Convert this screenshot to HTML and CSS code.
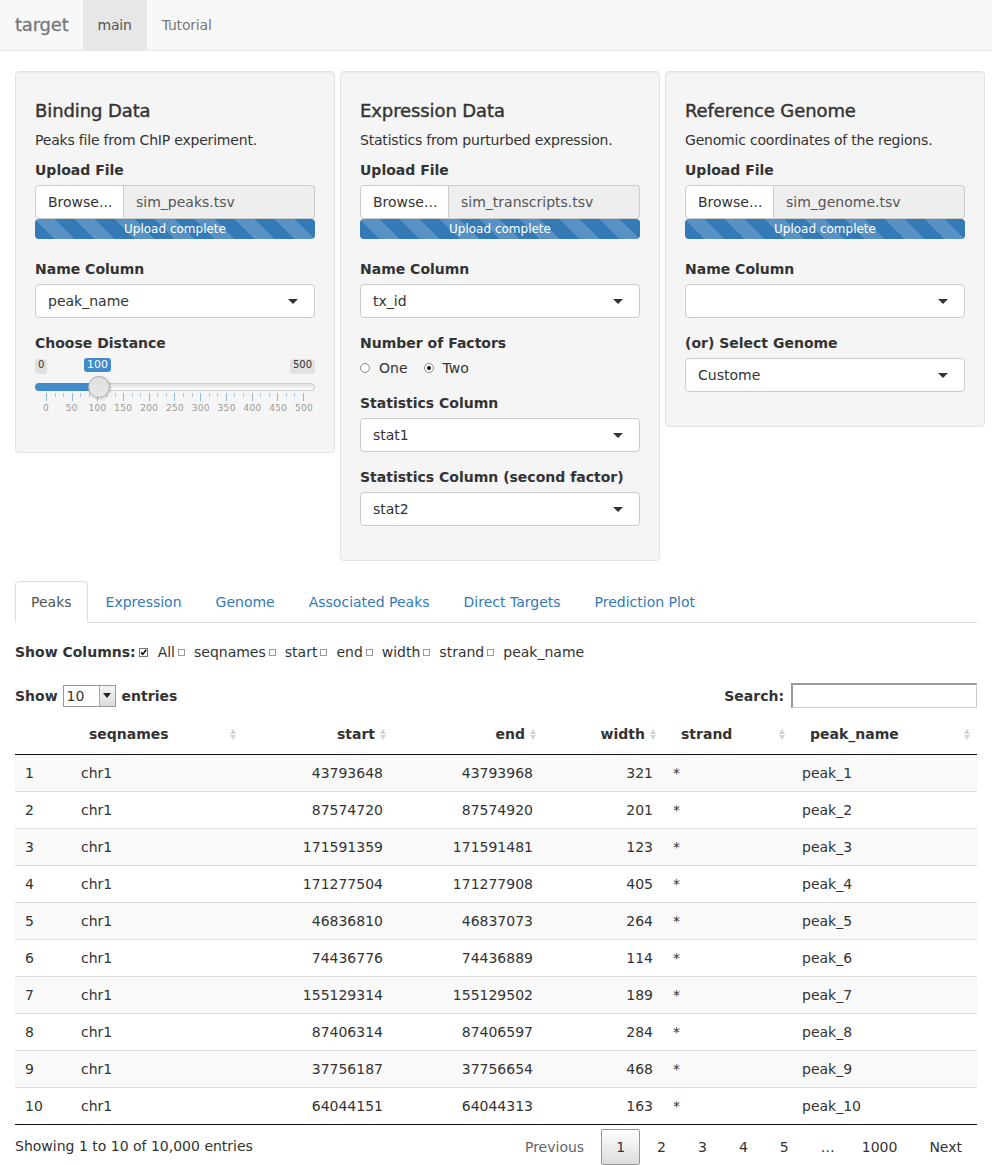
FILE: index.html
```html
<!DOCTYPE html>
<html>
<head>
<meta charset="utf-8">
<title>target</title>
<link rel="stylesheet" href="styles.css">
</head>
<body>
<nav class="navbar">
  <span class="brand">target</span>
  <a class="nav-link active">main</a>
  <a class="nav-link">Tutorial</a>
</nav>

<main class="page">
  <section class="wells">
    <div class="well">
      <h4 class="well-title">Binding Data</h4>
      <p class="well-desc">Peaks file from ChIP experiment.</p>
      <label class="lbl">Upload File</label>
      <div class="file-input">
        <span class="browse">Browse...</span>
        <span class="file-name">sim_peaks.tsv</span>
      </div>
      <div class="progress">Upload complete</div>
      <label class="lbl">Name Column</label>
      <div class="select"><span class="select-text">peak_name</span><span class="caret"></span></div>
      <label class="lbl">Choose Distance</label>
      <div class="slider">
        <div class="slider-labels">
          <span class="irs-minmax">0</span>
          <span class="irs-minmax">500</span>
          <span class="irs-from">100</span>
        </div>
        <div class="irs-line"><div class="irs-bar"></div><span class="irs-handle"></span></div>
        <div class="irs-ticks">
          <i class="maj"></i><i></i><i></i><i class="maj"></i><i></i><i></i><i class="maj"></i><i></i><i></i><i class="maj"></i><i></i><i></i><i class="maj"></i><i></i><i></i><i class="maj"></i><i></i><i></i><i class="maj"></i><i></i><i></i><i class="maj"></i><i></i><i></i><i class="maj"></i><i></i><i></i><i class="maj"></i><i></i><i></i><i class="maj"></i>
        </div>
        <div class="irs-nums">
          <span>0</span><span>50</span><span>100</span><span>150</span><span>200</span><span>250</span><span>300</span><span>350</span><span>400</span><span>450</span><span>500</span>
        </div>
      </div>
    </div>

    <div class="well">
      <h4 class="well-title">Expression Data</h4>
      <p class="well-desc">Statistics from purturbed expression.</p>
      <label class="lbl">Upload File</label>
      <div class="file-input">
        <span class="browse">Browse...</span>
        <span class="file-name">sim_transcripts.tsv</span>
      </div>
      <div class="progress">Upload complete</div>
      <label class="lbl">Name Column</label>
      <div class="select"><span class="select-text">tx_id</span><span class="caret"></span></div>
      <label class="lbl">Number of Factors</label>
      <div class="radios">
        <span class="radio"><span class="radio-dot"></span>One</span>
        <span class="radio"><span class="radio-dot checked"></span>Two</span>
      </div>
      <label class="lbl">Statistics Column</label>
      <div class="select"><span class="select-text">stat1</span><span class="caret"></span></div>
      <label class="lbl">Statistics Column (second factor)</label>
      <div class="select"><span class="select-text">stat2</span><span class="caret"></span></div>
    </div>

    <div class="well">
      <h4 class="well-title">Reference Genome</h4>
      <p class="well-desc">Genomic coordinates of the regions.</p>
      <label class="lbl">Upload File</label>
      <div class="file-input">
        <span class="browse">Browse...</span>
        <span class="file-name">sim_genome.tsv</span>
      </div>
      <div class="progress">Upload complete</div>
      <label class="lbl">Name Column</label>
      <div class="select"><span class="select-text"></span><span class="caret"></span></div>
      <label class="lbl">(or) Select Genome</label>
      <div class="select"><span class="select-text">Custome</span><span class="caret"></span></div>
    </div>
  </section>

  <ul class="tabs">
    <li class="tab active">Peaks</li>
    <li class="tab">Expression</li>
    <li class="tab">Genome</li>
    <li class="tab">Associated Peaks</li>
    <li class="tab">Direct Targets</li>
    <li class="tab">Prediction Plot</li>
  </ul>

  <div class="tab-content">
    <div class="show-cols">
      <b>Show Columns:</b>
      <span class="cb checked"><svg width="9" height="9" viewBox="0 0 9 9"><rect x="0.5" y="0.5" width="8" height="8" fill="#fff" stroke="#777"/><path d="M2 4.2 L3.8 6.2 L7.2 1.8" fill="none" stroke="#111" stroke-width="1.6"/></svg></span><span class="opt">All</span>
      <span class="cb"></span><span class="opt">seqnames</span>
      <span class="cb"></span><span class="opt">start</span>
      <span class="cb"></span><span class="opt">end</span>
      <span class="cb"></span><span class="opt">width</span>
      <span class="cb"></span><span class="opt">strand</span>
      <span class="cb"></span><span class="opt">peak_name</span>
    </div>

    <div class="dt-top">
      <div class="dt-length">
        <b>Show</b>
        <span class="dt-select"><span class="dt-select-val">10</span><span class="dt-select-btn"><span class="tri"></span></span></span>
        <b>entries</b>
      </div>
      <div class="dt-filter">
        <b>Search:</b>
        <span class="dt-search"></span>
      </div>
    </div>

    <table class="dt">
      <colgroup>
        <col class="c-idx"><col class="c-seq"><col class="c-num"><col class="c-num"><col class="c-w"><col class="c-str"><col class="c-name">
      </colgroup>
      <thead>
        <tr>
          <th class="idx"></th>
          <th>seqnames<span class="sort"></span></th>
          <th class="right">start<span class="sort"></span></th>
          <th class="right">end<span class="sort"></span></th>
          <th class="right">width<span class="sort"></span></th>
          <th>strand<span class="sort"></span></th>
          <th>peak_name<span class="sort"></span></th>
        </tr>
      </thead>
      <tbody>
        <tr><td>1</td><td>chr1</td><td class="right">43793648</td><td class="right">43793968</td><td class="right">321</td><td>*</td><td>peak_1</td></tr>
        <tr><td>2</td><td>chr1</td><td class="right">87574720</td><td class="right">87574920</td><td class="right">201</td><td>*</td><td>peak_2</td></tr>
        <tr><td>3</td><td>chr1</td><td class="right">171591359</td><td class="right">171591481</td><td class="right">123</td><td>*</td><td>peak_3</td></tr>
        <tr><td>4</td><td>chr1</td><td class="right">171277504</td><td class="right">171277908</td><td class="right">405</td><td>*</td><td>peak_4</td></tr>
        <tr><td>5</td><td>chr1</td><td class="right">46836810</td><td class="right">46837073</td><td class="right">264</td><td>*</td><td>peak_5</td></tr>
        <tr><td>6</td><td>chr1</td><td class="right">74436776</td><td class="right">74436889</td><td class="right">114</td><td>*</td><td>peak_6</td></tr>
        <tr><td>7</td><td>chr1</td><td class="right">155129314</td><td class="right">155129502</td><td class="right">189</td><td>*</td><td>peak_7</td></tr>
        <tr><td>8</td><td>chr1</td><td class="right">87406314</td><td class="right">87406597</td><td class="right">284</td><td>*</td><td>peak_8</td></tr>
        <tr><td>9</td><td>chr1</td><td class="right">37756187</td><td class="right">37756654</td><td class="right">468</td><td>*</td><td>peak_9</td></tr>
        <tr><td>10</td><td>chr1</td><td class="right">64044151</td><td class="right">64044313</td><td class="right">163</td><td>*</td><td>peak_10</td></tr>
      </tbody>
    </table>

    <div class="dt-bottom">
      <div class="dt-info">Showing 1 to 10 of 10,000 entries</div>
      <div class="dt-paging">
        <span class="pg disabled">Previous</span>
        <span class="pg current">1</span>
        <span class="pg">2</span>
        <span class="pg">3</span>
        <span class="pg">4</span>
        <span class="pg">5</span>
        <span class="pg ellipsis">…</span>
        <span class="pg">1000</span>
        <span class="pg">Next</span>
      </div>
    </div>
  </div>
</main>
</body>
</html>
```

FILE: styles.css
```css
* { box-sizing: border-box; }

body {
  margin: 0;
  font-family: "DejaVu Sans", Verdana, sans-serif;
  font-size: 14px;
  line-height: 20px;
  color: #333;
  background: #fff;
}

/* navbar */
.navbar {
  display: flex;
  height: 51px;
  background: #f8f8f8;
  border-bottom: 1px solid #e7e7e7;
  margin-bottom: 20px;
}
.brand {
  padding: 15px 14px 15px 15px;
  font-size: 18px;
  line-height: 20px;
  color: #777;
  letter-spacing: -0.2px;
  -webkit-text-stroke: 0.3px #777;
}
.nav-link {
  padding: 15px;
  line-height: 20px;
  color: #777;
  letter-spacing: -0.2px;
}
.nav-link.active {
  background: #e7e7e7;
  color: #555;
}

.page {
  padding: 0 15px;
}

/* wells */
.wells {
  display: grid;
  grid-template-columns: repeat(3, 320px);
  column-gap: 5px;
  align-items: start;
  margin-bottom: 20px;
}
.well {
  background: #f5f5f5;
  border: 1px solid #e3e3e3;
  border-radius: 4px;
  box-shadow: inset 0 1px 1px rgba(0,0,0,.05);
  padding: 19px;
  display: flex;
  flex-direction: column;
}
.well-title {
  margin: 10px 0 9px;
  font-size: 18px;
  line-height: 20px;
  font-weight: 500;
  color: #333;
  letter-spacing: -0.1px;
  -webkit-text-stroke: 0.4px #333;
}
.well-desc {
  margin: 0 0 10px;
  letter-spacing: -0.2px;
}
.lbl {
  display: block;
  font-weight: 700;
  line-height: 20px;
  margin-bottom: 5px;
}
.file-input {
  display: flex;
  height: 34px;
}
.browse {
  width: 89px;
  flex: none;
  background: #fff;
  border: 1px solid #ccc;
  border-radius: 4px 0 0 4px;
  padding: 6px 12px;
  color: #333;
}
.file-name {
  flex: 1;
  background: #eee;
  border: 1px solid #ccc;
  border-left: none;
  border-radius: 0 4px 4px 0;
  padding: 6px 12px;
  color: #555;
}
.progress {
  height: 20px;
  margin-bottom: 20px;
  border-radius: 4px;
  background-color: #337ab7;
  background-image: linear-gradient(45deg, rgba(255,255,255,.18) 25%, transparent 25%, transparent 50%, rgba(255,255,255,.18) 50%, rgba(255,255,255,.18) 75%, transparent 75%, transparent);
  background-size: 40px 40px;
  color: #fff;
  font-size: 12px;
  line-height: 20px;
  text-align: center;
}
.select {
  display: flex;
  align-items: center;
  justify-content: space-between;
  height: 34px;
  background: #fff;
  border: 1px solid #ccc;
  border-radius: 4px;
  padding: 6px 12px;
  margin-bottom: 15px;
}
.caret {
  width: 0;
  height: 0;
  border-top: 5px solid #333;
  border-left: 5px solid transparent;
  border-right: 5px solid transparent;
  margin-right: 4px;
}

/* radios */
.radios {
  display: flex;
  gap: 16px;
  height: 20px;
  margin-bottom: 15px;
  align-items: center;
}
.radio {
  display: flex;
  align-items: center;
  color: #333;
}
.radio-dot {
  width: 10px;
  height: 10px;
  border: 1px solid #888;
  border-radius: 50%;
  background: #fff;
  margin-right: 9px;
  position: relative;
}
.radio-dot.checked::after {
  content: "";
  position: absolute;
  left: 2px;
  top: 2px;
  width: 4px;
  height: 4px;
  border-radius: 50%;
  background: #111;
}

/* slider */
.slider {
  height: 75px;
  position: relative;
}
.slider-labels {
  display: flex;
  justify-content: space-between;
  height: 16px;
  padding-top: 1px;
}
.irs-minmax {
  font-size: 10px;
  line-height: 12px;
  padding: 0 3px;
  background: #e1e1e1;
  border-radius: 3px;
  color: #333;
}
.irs-from {
  position: absolute;
  left: 49px;
  top: 0;
  font-size: 11px;
  line-height: 14px;
  padding: 0 3px;
  background: #428bca;
  color: #fff;
  border-radius: 3px;
}
.irs-line {
  position: relative;
  margin-top: 9px;
  height: 8px;
  border: 1px solid #ccc;
  border-radius: 8px;
  background: linear-gradient(#dedede, #fff);
}
.irs-bar {
  position: absolute;
  left: -1px;
  top: -1px;
  width: 64px;
  height: 8px;
  background: #428bca;
  border-radius: 8px 0 0 8px;
}
.irs-handle {
  position: absolute;
  left: 52px;
  top: -8px;
  width: 22px;
  height: 22px;
  border-radius: 50%;
  border: 1px solid #aaa;
  background: linear-gradient(#dfdfdf, #e8e8e8);
  box-shadow: 1px 1px 3px rgba(0,0,0,.15);
}
.irs-ticks {
  display: flex;
  justify-content: space-between;
  align-items: flex-start;
  margin: 2px 11px 0 11px;
  height: 8px;
}
.irs-ticks i {
  display: block;
  width: 1px;
  height: 4px;
  background: #a9c6e2;
}
.irs-ticks i.maj {
  height: 8px;
  background: #8fb6dc;
}
.irs-nums {
  display: grid;
  grid-template-columns: repeat(11, 1fr);
  margin: 2px -2px 0;
  font-size: 9px;
  line-height: 11px;
  color: #999;
  text-align: center;
  letter-spacing: 0.3px;
}

/* tabs */
.tabs {
  list-style: none;
  margin: 0;
  padding: 0;
  display: flex;
  border-bottom: 1px solid #ddd;
}
.tab {
  padding: 10px 15px;
  line-height: 20px;
  color: #337ab7;
  margin-right: 2px;
  margin-bottom: -1px;
  border: 1px solid transparent;
  border-radius: 4px 4px 0 0;
}
.tab.active {
  color: #555;
  background: #fff;
  border-color: #ddd #ddd transparent;
}

.tab-content {
  padding-top: 19px;
}

.show-cols {
  display: flex;
  align-items: center;
  height: 20px;
  font-size: 14px;
}
.show-cols b { margin-right: 3px; }
.cb {
  display: inline-block;
  width: 7px;
  height: 7px;
  border: 1px solid #999;
  background: #fff;
  margin-left: 2px;
  margin-right: 9px;
}
.cb.checked {
  width: 9px;
  height: 9px;
  border: none;
  margin-left: 0;
  margin-right: 10px;
  display: flex;
}
.opt { margin-right: 1px; }

.dt-top {
  display: flex;
  justify-content: space-between;
  align-items: center;
  margin-top: 20px;
  height: 27px;
}
.dt-length, .dt-filter {
  display: flex;
  align-items: center;
}
.dt-select {
  display: flex;
  margin: 0 6px 0 5px;
  width: 53px;
  height: 22px;
  border: 1px solid #999;
  background: #fff;
}
.dt-select-val {
  flex: 1;
  padding-left: 3px;
  line-height: 20px;
}
.dt-select-btn {
  width: 16px;
  background: linear-gradient(#f4f4f4, #dcdcdc);
  border-left: 1px solid #aaa;
  display: flex;
  align-items: center;
  justify-content: center;
}
.tri {
  width: 0;
  height: 0;
  border-top: 5px solid #222;
  border-left: 4px solid transparent;
  border-right: 4px solid transparent;
}
.dt-filter b { margin-right: 7px; }
.dt-search {
  display: block;
  width: 186px;
  height: 25px;
  border: 1px solid #ccc;
  border-top: 2px solid #999;
  border-left: 2px solid #999;
  background: #fff;
}

/* table */
.dt {
  margin-top: 5px;
  width: 962px;
  table-layout: fixed;
  border-collapse: collapse;
}
.c-idx { width: 56px; }
.c-seq { width: 172px; }
.c-num { width: 150px; }
.c-w { width: 120px; }
.c-str { width: 129px; }
.c-name { width: 185px; }
.dt th {
  position: relative;
  padding: 10px 18px;
  text-align: left;
  font-weight: 700;
  border-bottom: 1px solid #111;
  line-height: 20px;
}
.dt th.right { text-align: right; }
.dt td {
  padding: 8px 10px;
  border-top: 1px solid #ddd;
  line-height: 20px;
  white-space: nowrap;
}
.dt tbody tr:first-child td { border-top: none; }
.dt tbody tr:nth-child(odd) { background: #f9f9f9; }
.dt tbody tr:last-child td { border-bottom: 1px solid #111; }
.dt td.right { text-align: right; }
.sort {
  position: absolute;
  right: 6px;
  top: 15px;
  width: 7px;
  height: 11px;
}
.sort::before, .sort::after {
  content: "";
  position: absolute;
  left: 0;
  width: 0;
  height: 0;
  border-left: 3.5px solid transparent;
  border-right: 3.5px solid transparent;
}
.sort::before { top: 0; border-bottom: 5px solid #d4d4d4; }
.sort::after { bottom: 0; border-top: 5px solid #d4d4d4; }

/* footer */
.dt-bottom {
  display: flex;
  justify-content: space-between;
  align-items: flex-start;
}
.dt-info {
  padding-top: 11px;
}
.dt-paging {
  display: flex;
  padding-top: 4px;
}
.pg {
  padding: 7px 14px;
  min-width: 21px;
  border: 1px solid transparent;
  border-radius: 2px;
  margin-left: 2px;
  line-height: 20px;
  color: #333;
  text-align: center;
}
.pg.disabled { color: #666; }
.pg.current {
  border-color: #979797;
  background: linear-gradient(#fff, #dcdcdc);
}
.pg.ellipsis { padding: 7px 9px 7px 14px; color: #333; }
```
